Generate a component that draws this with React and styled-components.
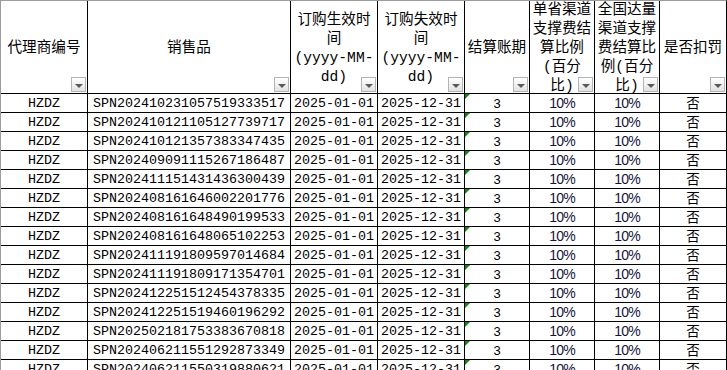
import React from "react";
import styled, { createGlobalStyle } from "styled-components";

const Global = createGlobalStyle`
  html, body { margin: 0; padding: 0; background: #fff; overflow: hidden; }
  body { width: 727px; height: 370px; }
`;

const Sheet = styled.div`
  display: grid;
  grid-template-columns: 86px 202px 86px 86px 64px 64px 64px 66px;
  grid-template-rows: 92px;
  grid-auto-rows: 18px;
  gap: 1px;
  width: 727px;
  box-sizing: border-box;
  background: #000;
  border-left: 1px solid #9c9c9c;
  border-top: 1px solid #9c9c9c;
  border-right: 1px solid #000;
`;

const HeadCell = styled.div`
  position: relative;
  background: #fff;
  overflow: hidden;
  display: flex;
  flex-direction: column;
  align-items: center;
  justify-content: center;
  padding-top: 3px;
  box-sizing: border-box;
  font-family: "Liberation Mono", "Noto Sans CJK SC", monospace;
  font-size: 14.6px;
  line-height: 19px;
  color: #000;
  white-space: nowrap;
`;

const HeadLine = styled.span`
  display: block;
`;

const FilterButton = styled.div`
  position: absolute;
  right: 1px;
  bottom: 1px;
  width: 15px;
  height: 15px;
  box-sizing: border-box;
  border: 1px solid #b4b4b4;
  background: linear-gradient(#ffffff, #e2e2e2);
  display: flex;
  align-items: center;
  justify-content: center;
  &::after {
    content: "";
    display: block;
    margin-top: 2px;
    border-left: 4px solid transparent;
    border-right: 4px solid transparent;
    border-top: 4px solid #5a5a5a;
  }
`;

const fonts = {
  mono: `font-family: "Liberation Mono", monospace; font-size: 13.33px; line-height: 16px; padding-top: 2px; color: #000;`,
  num: `font-family: "Liberation Sans", Arial, sans-serif; font-size: 13px; line-height: 16px; padding-top: 2px; color: #000;`,
  pct: `font-family: "Liberation Sans", Arial, sans-serif; font-size: 14px; letter-spacing: -0.8px; line-height: 16px; padding-top: 1px; color: #14143c;`,
  cjk: `font-family: "Noto Sans CJK SC", sans-serif; font-size: 13.5px; line-height: 16px; padding-top: 0; color: #000;`,
};

const Cell = styled.div`
  position: relative;
  background: #fff;
  overflow: hidden;
  white-space: nowrap;
  display: flex;
  justify-content: center;
  box-sizing: border-box;
  ${(p) => fonts[p.$kind]}
`;

const ErrorMark = styled.span`
  position: absolute;
  top: 0;
  left: 0;
  width: 0;
  height: 0;
  border-top: 5px solid #0a8a0a;
  border-right: 5px solid transparent;
`;

const headers = [
  ["代理商编号"],
  ["销售品"],
  ["订购生效时", "间", "(yyyy-MM-", "dd)"],
  ["订购失效时", "间", "(yyyy-MM-", "dd)"],
  ["结算账期"],
  ["单省渠道", "支撑费结", "算比例", "(百分", "比)"],
  ["全国达量", "渠道支撑", "费结算比", "例(百分", "比)"],
  ["是否扣罚"],
];

const products = [
  "SPN202410231057519333517",
  "SPN202410121105127739717",
  "SPN202410121357383347435",
  "SPN202409091115267186487",
  "SPN202411151431436300439",
  "SPN202408161646002201776",
  "SPN202408161648490199533",
  "SPN202408161648065102253",
  "SPN202411191809597014684",
  "SPN202411191809171354701",
  "SPN202412251512454378335",
  "SPN202412251519460196292",
  "SPN202502181753383670818",
  "SPN202406211551292873349",
  "SPN202406211550319880621",
];

export default function App() {
  return (
    <>
      <Global />
      <Sheet>
        {headers.map((lines, i) => (
          <HeadCell key={"h" + i}>
            {lines.map((l, j) => (
              <HeadLine key={j}>{l}</HeadLine>
            ))}
            <FilterButton />
          </HeadCell>
        ))}
        {products.map((p, i) => (
          <React.Fragment key={i}>
            <Cell $kind="mono">HZDZ</Cell>
            <Cell $kind="mono">{p}</Cell>
            <Cell $kind="mono">2025-01-01</Cell>
            <Cell $kind="mono">2025-12-31</Cell>
            <Cell $kind="num">
              <ErrorMark />3
            </Cell>
            <Cell $kind="pct">10%</Cell>
            <Cell $kind="pct">10%</Cell>
            <Cell $kind="cjk">否</Cell>
          </React.Fragment>
        ))}
      </Sheet>
    </>
  );
}
